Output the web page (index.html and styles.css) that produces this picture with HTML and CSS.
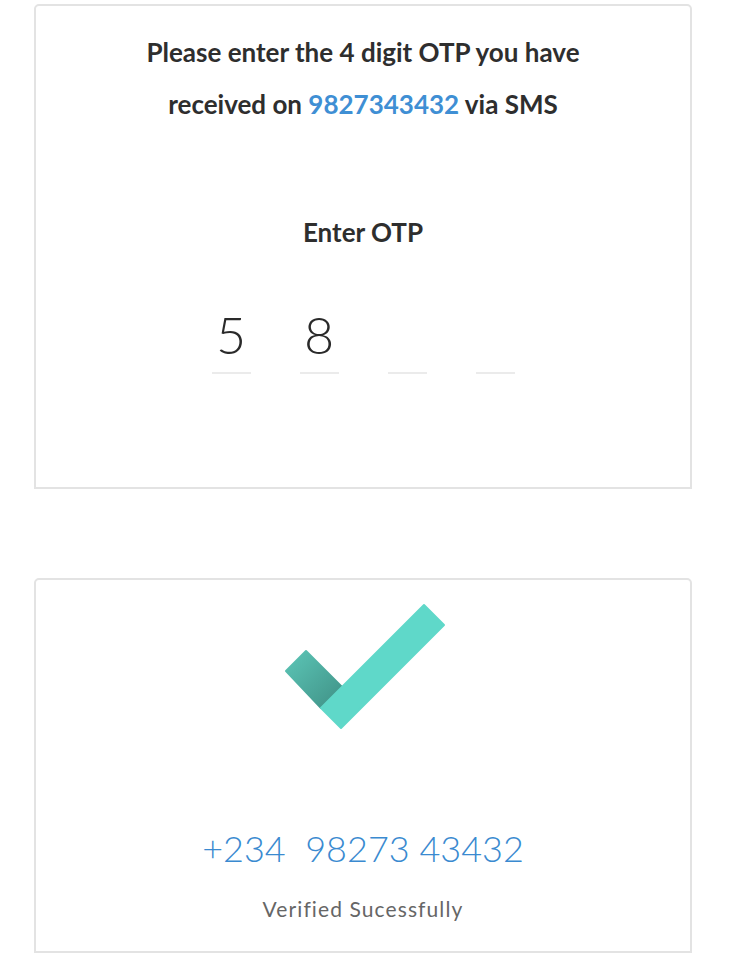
FILE: index.html
```html
<!DOCTYPE html>
<html>
<head>
<meta charset="utf-8">
<link rel="stylesheet" href="styles.css">
</head>
<body>
<div class="page">
  <section class="card card-otp">
    <p class="intro">Please enter the 4 digit OTP you have<br>received on <span class="link">9827343432</span> via SMS</p>
    <h2 class="label">Enter OTP</h2>
    <div class="otp-row">
      <div class="otp-cell"><span class="digit">5</span></div>
      <div class="otp-cell"><span class="digit">8</span></div>
      <div class="otp-cell"><span class="digit"></span></div>
      <div class="otp-cell"><span class="digit"></span></div>
    </div>
  </section>
  <section class="card card-done">
    <svg class="check" width="170" height="130" viewBox="278 601 170 130" aria-hidden="true">
      <defs>
        <linearGradient id="sg" x1="0" y1="0" x2="1" y2="1">
          <stop offset="0" stop-color="#5cc6b7"/>
          <stop offset="1" stop-color="#3f9085"/>
        </linearGradient>
      </defs>
      <polygon points="306,649 343,686 321,706 286,669" fill="url(#sg)" stroke="url(#sg)" stroke-width="2" stroke-linejoin="round"/>
      <polygon points="424,603 444,623 341,726 321,706" fill="#5fd8c9" stroke="#5fd8c9" stroke-width="2" stroke-linejoin="round"/>
    </svg>
    <div class="phone">+234&nbsp;&nbsp;98273 43432</div>
    <div class="status">Verified Sucessfully</div>
  </section>
</div>
</body>
</html>
```
FILE: styles.css
```css
html, body {
  margin: 0;
  padding: 0;
  background: #ffffff;
}
body {
  font-family: Lato, "Open Sans", sans-serif;
  color: #333333;
}
.page {
  padding: 4px 0 0 34px;
  display: flex;
  flex-direction: column;
  gap: 89px;
}
.card {
  box-sizing: border-box;
  width: 658px;
  border: 2px solid #e3e3e3;
  border-radius: 5px 5px 0 0;
  display: flex;
  flex-direction: column;
  align-items: center;
  background: #fff;
}
.card-otp {
  height: 485px;
  padding-top: 20px;
}
.intro {
  margin: 0;
  font-size: 26px;
  font-weight: 700;
  line-height: 52px;
  text-align: center;
  color: #2e2e2e;
}
.link {
  color: #3f8fd4;
}
.label {
  margin: 87px 0 0;
  font-size: 26px;
  font-weight: 700;
  line-height: 30px;
  color: #2e2e2e;
}
.otp-row {
  margin-top: 55px;
  display: flex;
  gap: 49px;
}
.otp-cell {
  box-sizing: border-box;
  width: 39px;
  height: 72px;
  padding-bottom: 6px;
  border-bottom: 2px solid #ebebeb;
  display: flex;
  justify-content: center;
  align-items: center;
}
.digit {
  font-size: 52px;
  font-weight: 300;
  line-height: 60px;
  color: #2a2a2a;
}
.card-done {
  height: 375px;
  padding-top: 23px;
}
.check {
  display: block;
}
.phone {
  margin-top: 91px;
  font-size: 36px;
  font-weight: 300;
  line-height: 48px;
  color: #3a8ad0;
}
.status {
  margin-top: 25px;
  font-size: 21px;
  font-weight: 400;
  line-height: 24px;
  color: #666666;
  letter-spacing: 1.1px;
}
```
